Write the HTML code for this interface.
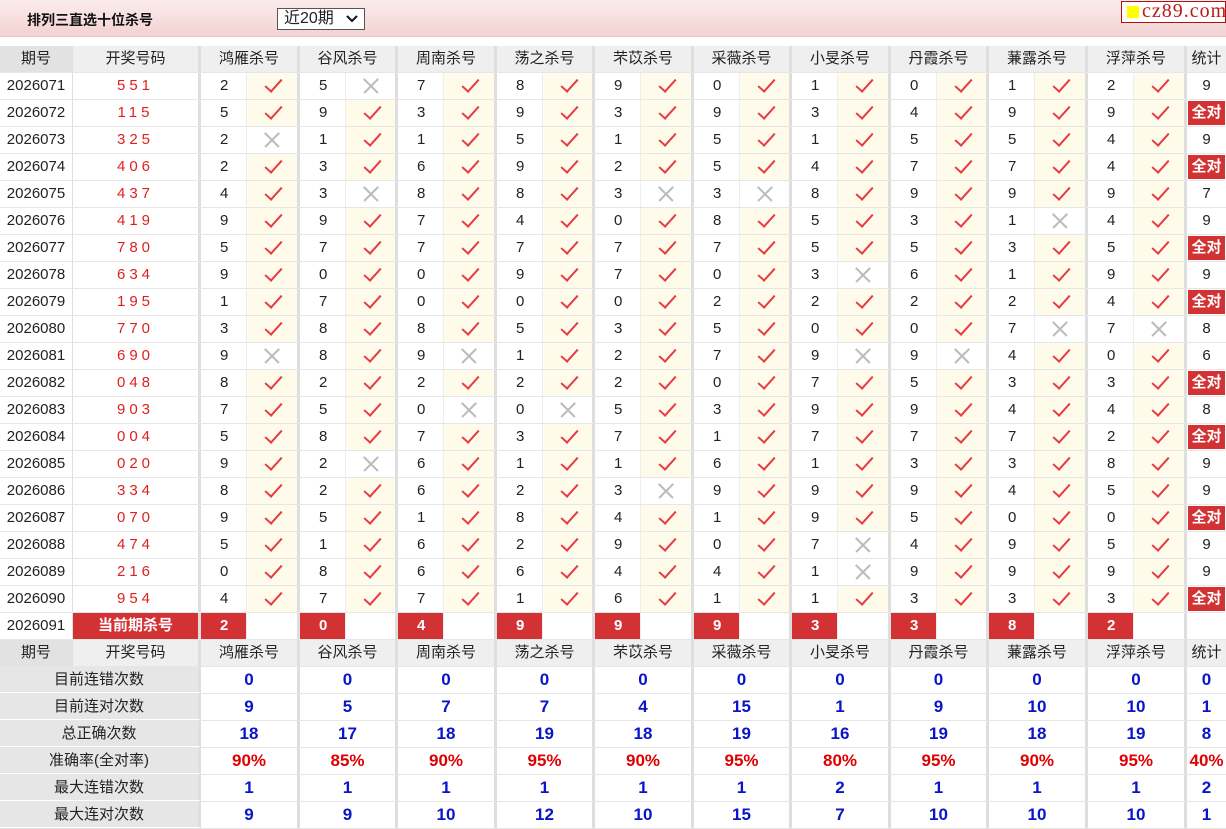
<!DOCTYPE html>
<html><head><meta charset="utf-8">
<style>
body{margin:0;width:1226px;height:829px;background:#fff;font-family:"Liberation Sans","Noto Sans CJK SC",sans-serif;font-size:15px;color:#222;overflow:hidden;position:relative}
.top{position:absolute;left:0;top:0;width:1226px;height:37px;background:linear-gradient(#fcecec,#f3d2d2);border-bottom:1px solid #e8c8c8;box-sizing:border-box}
.ttl{position:absolute;left:27px;top:10px;font-weight:bold;font-size:14px;color:#111}
.sel{position:absolute;left:277px;top:8px;width:88px;height:22px;border:1px solid #555;background:#fff;box-sizing:border-box;font-size:16px;line-height:20px;padding-left:6px}
.sel svg{position:absolute;right:6px;top:6px}
.logo{position:absolute;left:1121px;top:1px;width:105px;height:22px;border:1px solid #b01010;background:#fff;box-sizing:border-box}
.logo b{position:absolute;left:5px;top:4px;width:12px;height:12px;background:#ffff00}
.logo span{position:absolute;left:20px;top:-2px;font-family:"Liberation Serif",serif;font-size:20px;color:#c01818;letter-spacing:1px}
.tb{position:absolute;left:0;top:46px;width:1226px}
.r{display:flex;height:27px;border-bottom:1px solid #e6e6e6;box-sizing:border-box}
.r i{font-style:normal;display:block;box-sizing:border-box;height:100%;line-height:26px;text-align:center;position:relative}
.a{width:73px;border-right:1px solid #e0e0e0}
.b{width:128px;border-right:3px solid #dedede;color:#e02020;letter-spacing:4px}
.n{width:45px;text-align:left!important;padding-left:19px}
.m{width:54px;border-left:1px solid #eee;border-right:3px solid #dedede}
.r .m:nth-child(4n+2){width:53px}
.r .m:nth-child(22){width:54px}
.t{width:39px}
.y{background:#fffbea}
.y::after{content:"";position:absolute;left:22px;top:2px;width:7px;height:15px;border:solid #e63b45;border-width:0 2.2px 2.2px 0;transform:rotate(42deg)}
.x::before,.x::after{content:"";position:absolute;left:15px;top:12px;width:20px;height:1.5px;background:#bcbcbc;transform:rotate(45deg)}
.x::after{transform:rotate(-45deg)}
.k{background:#d33234;color:#fff;font-weight:bold}
.t.k{border:1px solid #fff;line-height:24px}
.hd{background:#efefef}
.hd .a{background:#e2e2e2}
.hd .b{color:#222;letter-spacing:0}
.g{width:99px;border-right:3px solid #dedede}
.hd .g:nth-child(even){width:98px}
.hd .g:nth-child(12){width:99px}
.st .g:nth-child(odd){width:98px}
.st .g:nth-child(11){width:99px}
.st i.g,.st i.t{color:#0a14c8;font-weight:bold;font-size:17px}
.st.p i.g,.st.p i.t{color:#e00000}
.l{width:201px;background:#e6e6e6;border-right:3px solid #dedede;border-bottom:1px solid #fff}
.b91{color:#fff!important;letter-spacing:0!important;font-weight:bold}
</style></head><body>
<div class="top"><div class="ttl">排列三直选十位杀号</div>
<div class="sel">近20期<svg width="12" height="8" viewBox="0 0 12 8"><path d="M1 1l5 5 5-5" fill="none" stroke="#111" stroke-width="2"/></svg></div>
<div class="logo"><b></b><span>cz89.com</span></div></div>
<div class="tb">
<div class="r hd"><i class="a">期号</i><i class="b">开奖号码</i><i class="g">鸿雁杀号</i><i class="g">谷风杀号</i><i class="g">周南杀号</i><i class="g">荡之杀号</i><i class="g">芣苡杀号</i><i class="g">采薇杀号</i><i class="g">小旻杀号</i><i class="g">丹霞杀号</i><i class="g">蒹露杀号</i><i class="g">浮萍杀号</i><i class="t">统计</i></div>
<div class="r"><i class="a">2026071</i><i class="b">551</i><i class="n">2</i><i class="m y"></i><i class="n">5</i><i class="m x"></i><i class="n">7</i><i class="m y"></i><i class="n">8</i><i class="m y"></i><i class="n">9</i><i class="m y"></i><i class="n">0</i><i class="m y"></i><i class="n">1</i><i class="m y"></i><i class="n">0</i><i class="m y"></i><i class="n">1</i><i class="m y"></i><i class="n">2</i><i class="m y"></i><i class="t">9</i></div>
<div class="r"><i class="a">2026072</i><i class="b">115</i><i class="n">5</i><i class="m y"></i><i class="n">9</i><i class="m y"></i><i class="n">3</i><i class="m y"></i><i class="n">9</i><i class="m y"></i><i class="n">3</i><i class="m y"></i><i class="n">9</i><i class="m y"></i><i class="n">3</i><i class="m y"></i><i class="n">4</i><i class="m y"></i><i class="n">9</i><i class="m y"></i><i class="n">9</i><i class="m y"></i><i class="t k">全对</i></div>
<div class="r"><i class="a">2026073</i><i class="b">325</i><i class="n">2</i><i class="m x"></i><i class="n">1</i><i class="m y"></i><i class="n">1</i><i class="m y"></i><i class="n">5</i><i class="m y"></i><i class="n">1</i><i class="m y"></i><i class="n">5</i><i class="m y"></i><i class="n">1</i><i class="m y"></i><i class="n">5</i><i class="m y"></i><i class="n">5</i><i class="m y"></i><i class="n">4</i><i class="m y"></i><i class="t">9</i></div>
<div class="r"><i class="a">2026074</i><i class="b">406</i><i class="n">2</i><i class="m y"></i><i class="n">3</i><i class="m y"></i><i class="n">6</i><i class="m y"></i><i class="n">9</i><i class="m y"></i><i class="n">2</i><i class="m y"></i><i class="n">5</i><i class="m y"></i><i class="n">4</i><i class="m y"></i><i class="n">7</i><i class="m y"></i><i class="n">7</i><i class="m y"></i><i class="n">4</i><i class="m y"></i><i class="t k">全对</i></div>
<div class="r"><i class="a">2026075</i><i class="b">437</i><i class="n">4</i><i class="m y"></i><i class="n">3</i><i class="m x"></i><i class="n">8</i><i class="m y"></i><i class="n">8</i><i class="m y"></i><i class="n">3</i><i class="m x"></i><i class="n">3</i><i class="m x"></i><i class="n">8</i><i class="m y"></i><i class="n">9</i><i class="m y"></i><i class="n">9</i><i class="m y"></i><i class="n">9</i><i class="m y"></i><i class="t">7</i></div>
<div class="r"><i class="a">2026076</i><i class="b">419</i><i class="n">9</i><i class="m y"></i><i class="n">9</i><i class="m y"></i><i class="n">7</i><i class="m y"></i><i class="n">4</i><i class="m y"></i><i class="n">0</i><i class="m y"></i><i class="n">8</i><i class="m y"></i><i class="n">5</i><i class="m y"></i><i class="n">3</i><i class="m y"></i><i class="n">1</i><i class="m x"></i><i class="n">4</i><i class="m y"></i><i class="t">9</i></div>
<div class="r"><i class="a">2026077</i><i class="b">780</i><i class="n">5</i><i class="m y"></i><i class="n">7</i><i class="m y"></i><i class="n">7</i><i class="m y"></i><i class="n">7</i><i class="m y"></i><i class="n">7</i><i class="m y"></i><i class="n">7</i><i class="m y"></i><i class="n">5</i><i class="m y"></i><i class="n">5</i><i class="m y"></i><i class="n">3</i><i class="m y"></i><i class="n">5</i><i class="m y"></i><i class="t k">全对</i></div>
<div class="r"><i class="a">2026078</i><i class="b">634</i><i class="n">9</i><i class="m y"></i><i class="n">0</i><i class="m y"></i><i class="n">0</i><i class="m y"></i><i class="n">9</i><i class="m y"></i><i class="n">7</i><i class="m y"></i><i class="n">0</i><i class="m y"></i><i class="n">3</i><i class="m x"></i><i class="n">6</i><i class="m y"></i><i class="n">1</i><i class="m y"></i><i class="n">9</i><i class="m y"></i><i class="t">9</i></div>
<div class="r"><i class="a">2026079</i><i class="b">195</i><i class="n">1</i><i class="m y"></i><i class="n">7</i><i class="m y"></i><i class="n">0</i><i class="m y"></i><i class="n">0</i><i class="m y"></i><i class="n">0</i><i class="m y"></i><i class="n">2</i><i class="m y"></i><i class="n">2</i><i class="m y"></i><i class="n">2</i><i class="m y"></i><i class="n">2</i><i class="m y"></i><i class="n">4</i><i class="m y"></i><i class="t k">全对</i></div>
<div class="r"><i class="a">2026080</i><i class="b">770</i><i class="n">3</i><i class="m y"></i><i class="n">8</i><i class="m y"></i><i class="n">8</i><i class="m y"></i><i class="n">5</i><i class="m y"></i><i class="n">3</i><i class="m y"></i><i class="n">5</i><i class="m y"></i><i class="n">0</i><i class="m y"></i><i class="n">0</i><i class="m y"></i><i class="n">7</i><i class="m x"></i><i class="n">7</i><i class="m x"></i><i class="t">8</i></div>
<div class="r"><i class="a">2026081</i><i class="b">690</i><i class="n">9</i><i class="m x"></i><i class="n">8</i><i class="m y"></i><i class="n">9</i><i class="m x"></i><i class="n">1</i><i class="m y"></i><i class="n">2</i><i class="m y"></i><i class="n">7</i><i class="m y"></i><i class="n">9</i><i class="m x"></i><i class="n">9</i><i class="m x"></i><i class="n">4</i><i class="m y"></i><i class="n">0</i><i class="m y"></i><i class="t">6</i></div>
<div class="r"><i class="a">2026082</i><i class="b">048</i><i class="n">8</i><i class="m y"></i><i class="n">2</i><i class="m y"></i><i class="n">2</i><i class="m y"></i><i class="n">2</i><i class="m y"></i><i class="n">2</i><i class="m y"></i><i class="n">0</i><i class="m y"></i><i class="n">7</i><i class="m y"></i><i class="n">5</i><i class="m y"></i><i class="n">3</i><i class="m y"></i><i class="n">3</i><i class="m y"></i><i class="t k">全对</i></div>
<div class="r"><i class="a">2026083</i><i class="b">903</i><i class="n">7</i><i class="m y"></i><i class="n">5</i><i class="m y"></i><i class="n">0</i><i class="m x"></i><i class="n">0</i><i class="m x"></i><i class="n">5</i><i class="m y"></i><i class="n">3</i><i class="m y"></i><i class="n">9</i><i class="m y"></i><i class="n">9</i><i class="m y"></i><i class="n">4</i><i class="m y"></i><i class="n">4</i><i class="m y"></i><i class="t">8</i></div>
<div class="r"><i class="a">2026084</i><i class="b">004</i><i class="n">5</i><i class="m y"></i><i class="n">8</i><i class="m y"></i><i class="n">7</i><i class="m y"></i><i class="n">3</i><i class="m y"></i><i class="n">7</i><i class="m y"></i><i class="n">1</i><i class="m y"></i><i class="n">7</i><i class="m y"></i><i class="n">7</i><i class="m y"></i><i class="n">7</i><i class="m y"></i><i class="n">2</i><i class="m y"></i><i class="t k">全对</i></div>
<div class="r"><i class="a">2026085</i><i class="b">020</i><i class="n">9</i><i class="m y"></i><i class="n">2</i><i class="m x"></i><i class="n">6</i><i class="m y"></i><i class="n">1</i><i class="m y"></i><i class="n">1</i><i class="m y"></i><i class="n">6</i><i class="m y"></i><i class="n">1</i><i class="m y"></i><i class="n">3</i><i class="m y"></i><i class="n">3</i><i class="m y"></i><i class="n">8</i><i class="m y"></i><i class="t">9</i></div>
<div class="r"><i class="a">2026086</i><i class="b">334</i><i class="n">8</i><i class="m y"></i><i class="n">2</i><i class="m y"></i><i class="n">6</i><i class="m y"></i><i class="n">2</i><i class="m y"></i><i class="n">3</i><i class="m x"></i><i class="n">9</i><i class="m y"></i><i class="n">9</i><i class="m y"></i><i class="n">9</i><i class="m y"></i><i class="n">4</i><i class="m y"></i><i class="n">5</i><i class="m y"></i><i class="t">9</i></div>
<div class="r"><i class="a">2026087</i><i class="b">070</i><i class="n">9</i><i class="m y"></i><i class="n">5</i><i class="m y"></i><i class="n">1</i><i class="m y"></i><i class="n">8</i><i class="m y"></i><i class="n">4</i><i class="m y"></i><i class="n">1</i><i class="m y"></i><i class="n">9</i><i class="m y"></i><i class="n">5</i><i class="m y"></i><i class="n">0</i><i class="m y"></i><i class="n">0</i><i class="m y"></i><i class="t k">全对</i></div>
<div class="r"><i class="a">2026088</i><i class="b">474</i><i class="n">5</i><i class="m y"></i><i class="n">1</i><i class="m y"></i><i class="n">6</i><i class="m y"></i><i class="n">2</i><i class="m y"></i><i class="n">9</i><i class="m y"></i><i class="n">0</i><i class="m y"></i><i class="n">7</i><i class="m x"></i><i class="n">4</i><i class="m y"></i><i class="n">9</i><i class="m y"></i><i class="n">5</i><i class="m y"></i><i class="t">9</i></div>
<div class="r"><i class="a">2026089</i><i class="b">216</i><i class="n">0</i><i class="m y"></i><i class="n">8</i><i class="m y"></i><i class="n">6</i><i class="m y"></i><i class="n">6</i><i class="m y"></i><i class="n">4</i><i class="m y"></i><i class="n">4</i><i class="m y"></i><i class="n">1</i><i class="m x"></i><i class="n">9</i><i class="m y"></i><i class="n">9</i><i class="m y"></i><i class="n">9</i><i class="m y"></i><i class="t">9</i></div>
<div class="r"><i class="a">2026090</i><i class="b">954</i><i class="n">4</i><i class="m y"></i><i class="n">7</i><i class="m y"></i><i class="n">7</i><i class="m y"></i><i class="n">1</i><i class="m y"></i><i class="n">6</i><i class="m y"></i><i class="n">1</i><i class="m y"></i><i class="n">1</i><i class="m y"></i><i class="n">3</i><i class="m y"></i><i class="n">3</i><i class="m y"></i><i class="n">3</i><i class="m y"></i><i class="t k">全对</i></div>
<div class="r"><i class="a">2026091</i><i class="b k b91">当前期杀号</i><i class="n k">2</i><i class="m"></i><i class="n k">0</i><i class="m"></i><i class="n k">4</i><i class="m"></i><i class="n k">9</i><i class="m"></i><i class="n k">9</i><i class="m"></i><i class="n k">9</i><i class="m"></i><i class="n k">3</i><i class="m"></i><i class="n k">3</i><i class="m"></i><i class="n k">8</i><i class="m"></i><i class="n k">2</i><i class="m"></i><i class="t"></i></div>
<div class="r hd"><i class="a">期号</i><i class="b">开奖号码</i><i class="g">鸿雁杀号</i><i class="g">谷风杀号</i><i class="g">周南杀号</i><i class="g">荡之杀号</i><i class="g">芣苡杀号</i><i class="g">采薇杀号</i><i class="g">小旻杀号</i><i class="g">丹霞杀号</i><i class="g">蒹露杀号</i><i class="g">浮萍杀号</i><i class="t">统计</i></div>
<div class="r st"><i class="l">目前连错次数</i><i class="g">0</i><i class="g">0</i><i class="g">0</i><i class="g">0</i><i class="g">0</i><i class="g">0</i><i class="g">0</i><i class="g">0</i><i class="g">0</i><i class="g">0</i><i class="t">0</i></div>
<div class="r st"><i class="l">目前连对次数</i><i class="g">9</i><i class="g">5</i><i class="g">7</i><i class="g">7</i><i class="g">4</i><i class="g">15</i><i class="g">1</i><i class="g">9</i><i class="g">10</i><i class="g">10</i><i class="t">1</i></div>
<div class="r st"><i class="l">总正确次数</i><i class="g">18</i><i class="g">17</i><i class="g">18</i><i class="g">19</i><i class="g">18</i><i class="g">19</i><i class="g">16</i><i class="g">19</i><i class="g">18</i><i class="g">19</i><i class="t">8</i></div>
<div class="r st p"><i class="l">准确率(全对率)</i><i class="g">90%</i><i class="g">85%</i><i class="g">90%</i><i class="g">95%</i><i class="g">90%</i><i class="g">95%</i><i class="g">80%</i><i class="g">95%</i><i class="g">90%</i><i class="g">95%</i><i class="t">40%</i></div>
<div class="r st"><i class="l">最大连错次数</i><i class="g">1</i><i class="g">1</i><i class="g">1</i><i class="g">1</i><i class="g">1</i><i class="g">1</i><i class="g">2</i><i class="g">1</i><i class="g">1</i><i class="g">1</i><i class="t">2</i></div>
<div class="r st"><i class="l">最大连对次数</i><i class="g">9</i><i class="g">9</i><i class="g">10</i><i class="g">12</i><i class="g">10</i><i class="g">15</i><i class="g">7</i><i class="g">10</i><i class="g">10</i><i class="g">10</i><i class="t">1</i></div>
</div>
</body></html>
